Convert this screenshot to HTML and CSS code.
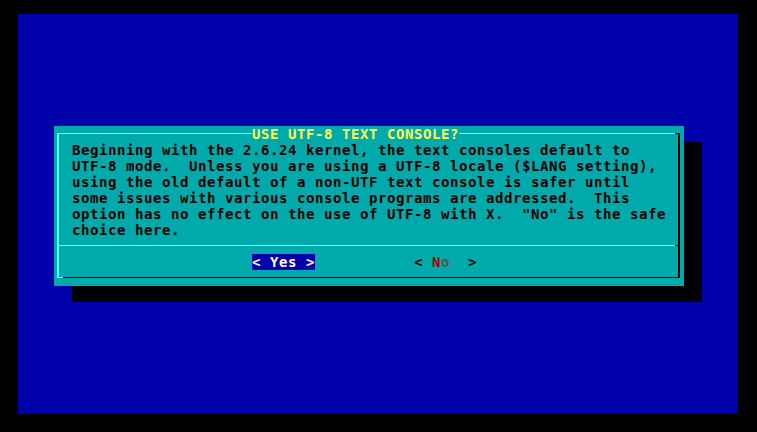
FILE: index.html
```html
<!DOCTYPE html>
<html>
<head>
<meta charset="utf-8">
<link rel="stylesheet" href="styles.css">
</head>
<body>
<div class="screen">
  <div class="dialog">
    <div class="frame">
      <div class="title">USE UTF-8 TEXT CONSOLE?</div>
      <div class="text">
        <div class="line">Beginning with the 2.6.24 kernel, the text consoles default to</div>
        <div class="line">UTF-8 mode.  Unless you are using a UTF-8 locale ($LANG setting),</div>
        <div class="line">using the old default of a non-UTF text console is safer until</div>
        <div class="line">some issues with various console programs are addressed.  This</div>
        <div class="line">option has no effect on the use of UTF-8 with X.  "No" is the safe</div>
        <div class="line">choice here.</div>
      </div>
      <div class="separator"></div>
      <div class="buttons">
        <span class="button active">&lt; Yes &gt;</span>
        <span class="button">&lt; <span class="hot">N</span><span class="dim">o</span>  &gt;</span>
      </div>
    </div>
  </div>
</div>
</body>
</html>
```
FILE: styles.css
```css
html, body {
  margin: 0;
  padding: 0;
}
body {
  background: #000000;
  width: 757px;
  height: 432px;
  padding: 14px 18px;
  box-sizing: border-box;
  font-family: "DejaVu Sans Mono", "Liberation Mono", monospace;
  font-weight: bold;
  font-size: 14px;
  letter-spacing: 0.5713px;
  line-height: 16px;
}
.screen {
  width: 720px;
  height: 400px;
  background: #0000AA;
  padding: 112px 0 0 36px;
  box-sizing: border-box;
}
.dialog {
  width: 630px;
  height: 160px;
  background: #00AAAA;
  box-shadow: 18px 16px 0 0 #000000;
  padding: 7px 4px 8px 3px;
  box-sizing: border-box;
}
.frame {
  position: relative;
  height: 145px;
  box-sizing: border-box;
  border-left: 2px solid #55FFFF;
  border-top: 1px solid #55FFFF;
  border-right: 2px solid #000000;
  border-bottom: 1px solid #000000;
}
.frame::before {
  content: "";
  position: absolute;
  top: -1px;
  right: -2px;
  width: 5px;
  height: 1px;
  background: #000000;
}
.frame::after {
  content: "";
  position: absolute;
  bottom: -1px;
  left: -2px;
  width: 6px;
  height: 1px;
  background: #55FFFF;
}
.title {
  position: absolute;
  top: -8px;
  left: 193px;
  height: 16px;
  background: #00AAAA;
  color: #FFFF55;
  white-space: pre;
}
.text {
  padding: 8px 0 0 13px;
  color: #000000;
}
.line {
  height: 16px;
  white-space: pre;
}
.separator {
  position: relative;
  height: 1px;
  margin: 7px 0 8px;
  background: #55FFFF;
}
.separator::after {
  content: "";
  position: absolute;
  top: 0;
  right: 0;
  width: 3px;
  height: 1px;
  background: #000000;
}
.buttons {
  display: flex;
  gap: 99px;
  padding-left: 193px;
  height: 16px;
}
.button {
  white-space: pre;
  color: #000000;
  height: 16px;
}
.button.active {
  background: #0000AA;
  color: #FFFFFF;
}
.hot {
  color: #AA0000;
}
.dim {
  color: #555555;
}
```
